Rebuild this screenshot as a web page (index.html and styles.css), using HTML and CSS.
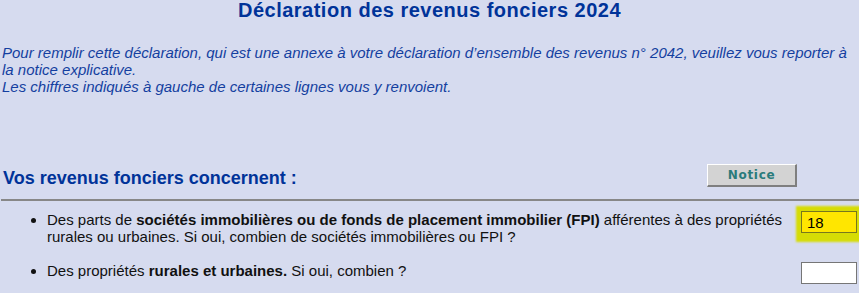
FILE: index.html
```html
<!DOCTYPE html>
<html lang="fr">
<head>
<meta charset="utf-8">
<title>Déclaration des revenus fonciers 2024</title>
<link rel="stylesheet" href="styles.css">
</head>
<body>
<div class="page">
  <h1 class="title">Déclaration des revenus fonciers 2024</h1>
  <p class="intro">Pour remplir cette déclaration, qui est une annexe à votre déclaration d’ensemble des revenus n° 2042, veuillez vous reporter à<br>la notice explicative.<br>Les chiffres indiqués à gauche de certaines lignes vous y renvoient.</p>
  <div class="section-head">
    <h2 class="section-title">Vos revenus fonciers concernent :</h2>
    <button class="notice" type="button">Notice</button>
  </div>
  <hr class="rule">
  <div class="rows">
    <div class="row">
      <ul class="item-list">
        <li>Des parts de <b>sociétés immobilières ou de fonds de placement immobilier (FPI)</b> afférentes à des propriétés rurales ou urbaines. Si oui, combien de sociétés immobilières ou FPI ?</li>
      </ul>
      <input class="field field-hl" type="text" value="18">
    </div>
    <div class="row">
      <ul class="item-list">
        <li>Des propriétés <b>rurales et urbaines.</b> Si oui, combien ?</li>
      </ul>
      <input class="field" type="text" value="">
    </div>
  </div>
</div>
</body>
</html>
```
FILE: styles.css
```css
body {
  margin: 0;
  background: #d6dbef;
  font-family: "Liberation Sans", Arial, sans-serif;
}

.page {
  padding: 0 2px;
}

.title {
  margin: 0;
  font-size: 20px;
  line-height: 20px;
  letter-spacing: 0.5px;
  font-weight: bold;
  text-align: center;
  color: #003399;
}

.intro {
  margin: 24px 0 0;
  font-size: 15px;
  line-height: 17px;
  font-style: italic;
  color: #143fa0;
}

.section-head {
  display: flex;
  justify-content: space-between;
  align-items: flex-start;
  margin-top: 69px;
  padding-right: 60px;
}

.section-title {
  margin: 4px 0 0 1px;
  font-size: 18px;
  line-height: 20px;
  font-weight: bold;
  color: #003399;
}

.notice {
  width: 90px;
  height: 23px;
  margin: 0;
  padding: 0;
  box-sizing: border-box;
  background: #d3d3d3;
  border-style: solid;
  border-width: 1px 2px 2px 1px;
  border-color: #ffffff #7f7f7f #7f7f7f #ffffff;
  font-family: "DejaVu Sans", Verdana, sans-serif;
  font-size: 12px;
  font-weight: bold;
  letter-spacing: 0.7px;
  color: #2a7b7b;
}

.rule {
  margin: 11px -2px 0 -1px;
  border: 0;
  height: 2px;
  background: #878787;
}

.rows {
  margin-top: 10px;
}

.row {
  display: grid;
  grid-template-columns: 1fr 56px;
  column-gap: 8px;
  align-items: start;
}

.row + .row {
  margin-top: 17px;
}

.item-list {
  margin: 0;
  padding-left: 45px;
  font-size: 15px;
  line-height: 17px;
  color: #111111;
}

.field {
  width: 56px;
  height: 22px;
  margin: 0;
  box-sizing: border-box;
  border: 1px solid #767676;
  background: #ffffff;
  padding: 0 5px;
  font-family: "Liberation Sans", Arial, sans-serif;
  font-size: 15px;
  color: #000;
}

.field-hl {
  background: #ffe600;
  border-color: #77771e;
  box-shadow: 2px 2px 2px 7px #d6dc05;
}
```
